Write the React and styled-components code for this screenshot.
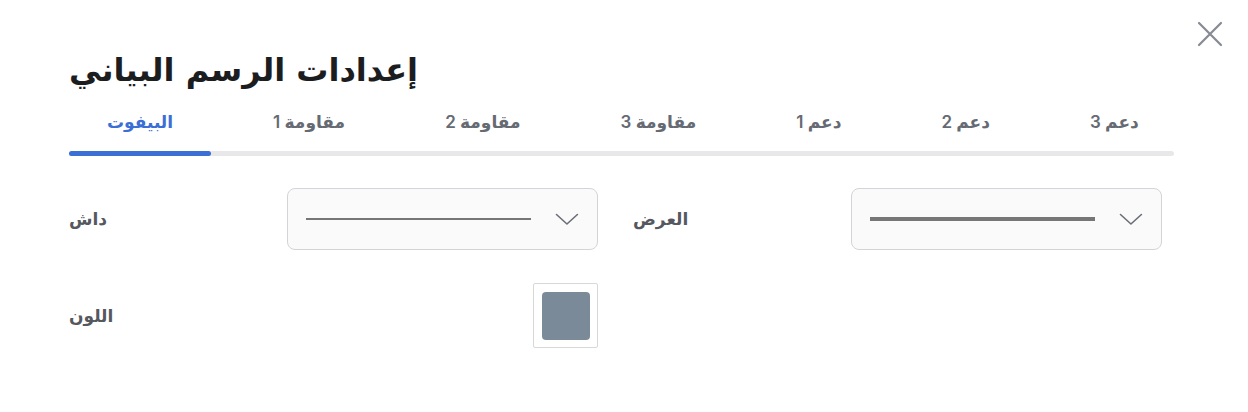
import React, { useState } from "react";
import styled, { createGlobalStyle } from "styled-components";

const GlobalStyle = createGlobalStyle`
  html, body {
    margin: 0;
    padding: 0;
    background: #ffffff;
  }
  body {
    font-family: Inter, "DejaVu Sans", sans-serif;
  }
`;

const Dialog = styled.div`
  position: relative;
  width: 1248px;
  height: 412px;
  box-sizing: border-box;
  padding: 50px 0 0 69px;
  background: #ffffff;
  overflow: hidden;
`;

const CloseButton = styled.button`
  position: absolute;
  top: 19px;
  right: 23px;
  width: 30px;
  height: 30px;
  padding: 0;
  border: 0;
  background: transparent;
  display: flex;
  align-items: center;
  justify-content: center;
  cursor: pointer;
`;

const Title = styled.h1`
  margin: 0;
  height: 40px;
  line-height: 40px;
  font-size: 32px;
  font-weight: 700;
  color: #1c1d1f;
  font-family: "DejaVu Sans", sans-serif;
`;

const Tabs = styled.div`
  width: 1105px;
  margin-top: 18px;
`;

const TabList = styled.div`
  display: flex;
  gap: 24px;
`;

const Tab = styled.button`
  height: 28px;
  padding: 0 38px;
  border: 0;
  background: transparent;
  font-family: Inter, "DejaVu Sans", sans-serif;
  font-size: 17px;
  font-weight: 600;
  color: ${(p) => (p.$active ? "#3b6fd6" : "#666a73")};
  white-space: nowrap;
  cursor: pointer;
`;

const Track = styled.div`
  margin-top: 15px;
  height: 5px;
  border-radius: 3px;
  background: #e8e8ea;
  display: flex;
`;

const Indicator = styled.div`
  height: 5px;
  border-radius: 3px;
  background: #3b6fd6;
`;

const Form = styled.div`
  margin-top: 32px;
  width: 1093px;
  display: grid;
  grid-template-columns: 529px 529px;
  column-gap: 35px;
  row-gap: 33px;
`;

const Field = styled.div`
  display: flex;
  align-items: center;
  justify-content: space-between;
`;

const Label = styled.span`
  font-size: 17px;
  font-weight: 600;
  color: #55585e;
  font-family: "DejaVu Sans", sans-serif;
`;

const Select = styled.div`
  width: 311px;
  height: 62px;
  box-sizing: border-box;
  border: 1px solid #d3d4d8;
  border-radius: 8px;
  background: #fafafa;
  display: flex;
  align-items: center;
  padding: 0 18px 0 18px;
  gap: 24px;
`;

const LinePreview = styled.div`
  width: 226px;
  height: ${(p) => p.$thickness}px;
  background: #767676;
`;

const Swatch = styled.div`
  width: 65px;
  height: 65px;
  box-sizing: border-box;
  border: 1px solid #d7d8da;
  border-radius: 2px;
  display: flex;
  align-items: center;
  justify-content: center;
`;

const SwatchFill = styled.div`
  width: 48px;
  height: 48px;
  border-radius: 4px;
  background: ${(p) => p.$color};
`;

const Chevron = () => (
  <svg width="24" height="16" viewBox="0 0 24 16" fill="none">
    <path
      d="M1.5 3.5 L12 13 L22.5 3.5"
      stroke="#6a6e76"
      strokeWidth="1.6"
      strokeLinecap="round"
      strokeLinejoin="round"
    />
  </svg>
);

const tabs = [
  "البيفوت",
  "مقاومة 1",
  "مقاومة 2",
  "مقاومة 3",
  "دعم 1",
  "دعم 2",
  "دعم 3",
];

export default function App() {
  const [active, setActive] = useState(0);

  return (
    <Dialog>
      <GlobalStyle />
      <CloseButton aria-label="close">
        <svg width="26" height="26" viewBox="0 0 26 26" fill="none">
          <path
            d="M2 2 L24 24 M24 2 L2 24"
            stroke="#868a93"
            strokeWidth="2.2"
            strokeLinecap="round"
          />
        </svg>
      </CloseButton>
      <Title>إعدادات الرسم البياني</Title>
      <Tabs>
        <TabList>
          {tabs.map((t, i) => (
            <Tab key={t} $active={i === active} onClick={() => setActive(i)}>
              {t}
            </Tab>
          ))}
        </TabList>
        <Track>
          <Indicator style={{ width: 142 }} />
        </Track>
      </Tabs>
      <Form>
        <Field>
          <Label>داش</Label>
          <Select>
            <LinePreview $thickness={2} />
            <Chevron />
          </Select>
        </Field>
        <Field>
          <Label>العرض</Label>
          <Select>
            <LinePreview $thickness={4} />
            <Chevron />
          </Select>
        </Field>
        <Field>
          <Label>اللون</Label>
          <Swatch>
            <SwatchFill $color="#7b8a99" />
          </Swatch>
        </Field>
      </Form>
    </Dialog>
  );
}
